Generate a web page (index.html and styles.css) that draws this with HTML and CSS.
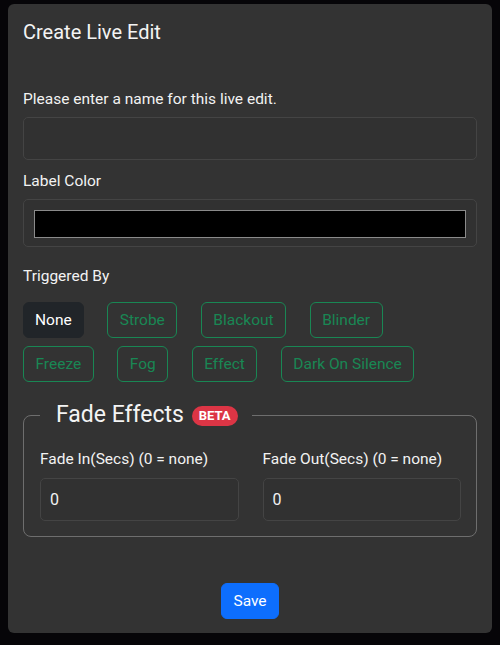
FILE: index.html
```html
<!DOCTYPE html>
<html>
<head>
<meta charset="utf-8">
<link rel="stylesheet" href="styles.css">
</head>
<body>
<div class="modal">
  <h5 class="title">Create Live Edit</h5>
  <div class="modal-body">
    <label class="label first">Please enter a name for this live edit.</label>
    <div class="input"></div>
    <label class="label color-label">Label Color</label>
    <div class="color-box"><div class="color-swatch"></div></div>
    <label class="label trig-label">Triggered By</label>
    <div class="btn-rows">
      <div class="btn-row">
        <span class="btn btn-dark">None</span>
        <span class="btn btn-outline">Strobe</span>
        <span class="btn btn-outline">Blackout</span>
        <span class="btn btn-outline">Blinder</span>
      </div>
      <div class="btn-row">
        <span class="btn btn-outline">Freeze</span>
        <span class="btn btn-outline">Fog</span>
        <span class="btn btn-outline">Effect</span>
        <span class="btn btn-outline">Dark On Silence</span>
      </div>
    </div>
    <fieldset class="fade">
      <legend class="fade-legend">Fade Effects <span class="badge">BETA</span></legend>
      <div class="fade-grid">
        <div class="fade-col">
          <label class="small-label">Fade In(Secs) (0 = none)</label>
          <div class="num-input">0</div>
        </div>
        <div class="fade-col">
          <label class="small-label">Fade Out(Secs) (0 = none)</label>
          <div class="num-input">0</div>
        </div>
      </div>
    </fieldset>
  </div>
  <div class="footer">
    <span class="btn btn-primary">Save</span>
  </div>
</div>
</body>
</html>
```

FILE: styles.css
```css
* { box-sizing: border-box; }
html, body { margin: 0; padding: 0; }
body {
  background: #060508;
  font-family: Roboto, "Liberation Sans", sans-serif;
  color: #f2f2f2;
  width: 500px;
  height: 645px;
  overflow: hidden;
}
.modal {
  margin: 4px 8px 0 8px;
  width: 484px;
  height: 629px;
  background: #333333;
  border-radius: 6px;
  padding: 13px 15px 0 15px;
  display: flex;
  flex-direction: column;
}
.title {
  margin: 0;
  font-size: 20px;
  font-weight: 400;
  line-height: 30px;
  color: #f4f4f4;
}
.modal-body {
  display: flex;
  flex-direction: column;
}
.label {
  display: block;
  font-size: 15.5px;
  line-height: 24px;
  color: #f2f2f2;
}
.label.first { margin-top: 40px; }
.input {
  margin-top: 6px;
  height: 43px;
  border: 1px solid #444;
  border-radius: 5px;
  background: #313131;
}
.color-label { margin-top: 9px; }
.color-box {
  margin-top: 6px;
  height: 48px;
  border: 1px solid #444;
  border-radius: 5px;
  background: #313131;
  padding: 10px 10px;
}
.color-swatch {
  height: 28px;
  background: #000;
  border: 1px solid #8a8a8a;
}
.trig-label { margin-top: 17px; }
.btn-rows {
  margin-top: 14px;
  display: flex;
  flex-direction: column;
  gap: 8px;
}
.btn-row {
  display: flex;
  gap: 23.5px;
}
.btn {
  display: inline-block;
  font-size: 15.5px;
  line-height: 24px;
  padding: 5px 11.5px;
  border: 1px solid transparent;
  border-radius: 6px;
  white-space: nowrap;
}
.btn-dark {
  background: #212529;
  border-color: #212529;
  color: #ffffff;
  padding: 5px 11px;
}
.btn-outline {
  border-color: #198754;
  color: #198754;
}
.fade {
  margin: 20px 0 0 0;
  border: 1px solid #6e6e6e;
  border-radius: 8px;
  padding: 0 15px 15px 16px;
}
.fade-legend {
  padding: 0 14px 0 16px;
  font-size: 23px;
  line-height: 26px;
  color: #f4f4f4;
}
.badge {
  display: inline-block;
  vertical-align: 2px;
  background: #dc3545;
  color: #fff;
  font-size: 13px;
  font-weight: 700;
  line-height: 14px;
  padding: 3px 7px 3px 7px;
  border-radius: 10px;
  margin-left: 2px;
}
.fade-grid {
  display: grid;
  grid-template-columns: 1fr 1fr;
  column-gap: 24px;
  margin-top: 20px;
}
.small-label {
  display: block;
  font-size: 15.5px;
  line-height: 22px;
  color: #f2f2f2;
}
.num-input {
  margin-top: 8px;
  height: 43px;
  border: 1px solid #444;
  border-radius: 5px;
  background: #313131;
  padding: 10px 9px;
  font-size: 16px;
  line-height: 21px;
  color: #f2f2f2;
}
.footer {
  margin-top: auto;
  padding-bottom: 14px;
  display: flex;
  justify-content: center;
}
.btn-primary {
  background: #0d6efd;
  border-color: #0d6efd;
  color: #fff;
}
```
